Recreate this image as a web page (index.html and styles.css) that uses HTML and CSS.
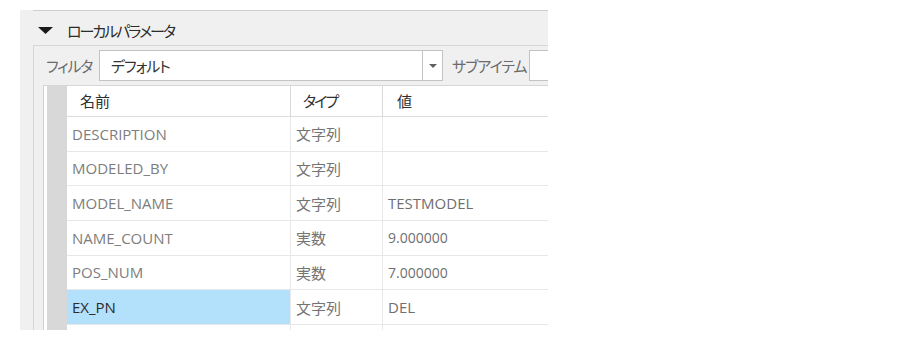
FILE: index.html
```html
<!DOCTYPE html>
<html lang="ja">
<head>
<meta charset="utf-8">
<link rel="stylesheet" href="styles.css">
</head>
<body>
<div class="panel">
  <div class="topline"></div>
  <div class="section-head">
    <svg class="tri" width="15" height="7" viewBox="0 0 15 7"><polygon points="0,0 15,0 7.5,7" fill="#1a1a1a"/></svg>
    <span class="title">ローカルパラメータ</span>
  </div>
  <div class="group">
    <div class="filter-row">
      <span class="label">フィルタ</span>
      <div class="combo">
        <span class="combo-text">デフォルト</span>
        <span class="combo-btn"><svg width="8" height="4" viewBox="0 0 8 4"><polygon points="0,0 8,0 4,4" fill="#606060"/></svg></span>
      </div>
      <span class="label sub">サブアイテム</span>
      <div class="input"></div>
    </div>
    <div class="table">
      <div class="rowhead"></div>
      <div class="grid">
        <div class="hcell c1">名前</div><div class="hcell c2 kana">タイプ</div><div class="hcell c3">値</div>
        <div class="cell c1">DESCRIPTION</div><div class="cell c2">文字列</div><div class="cell c3"></div>
        <div class="cell c1">MODELED_BY</div><div class="cell c2">文字列</div><div class="cell c3"></div>
        <div class="cell c1">MODEL_NAME</div><div class="cell c2">文字列</div><div class="cell c3">TESTMODEL</div>
        <div class="cell c1">NAME_COUNT</div><div class="cell c2">実数</div><div class="cell c3 num">9.000000</div>
        <div class="cell c1">POS_NUM</div><div class="cell c2">実数</div><div class="cell c3 num">7.000000</div>
        <div class="cell c1 sel">EX_PN</div><div class="cell c2">文字列</div><div class="cell c3">DEL</div>
        <div class="cell c1"></div><div class="cell c2"></div><div class="cell c3"></div>
      </div>
    </div>
  </div>
</div>
</body>
</html>
```

FILE: styles.css
```css
* { box-sizing: border-box; }
html, body { margin: 0; padding: 0; background: #ffffff; }
body {
  font-family: "Open Sans", "Noto Sans CJK JP", sans-serif;
  font-size: 15px;
  color: #333;
}
.panel {
  margin: 10px 0 0 20px;
  width: 528px;
  height: 320px;
  background: #f0f0f0;
  overflow: hidden;
}
.topline {
  margin-left: 13px;
  border-top: 1px solid #cfcfcf;
  width: 600px;
}
.section-head {
  height: 34px;
  display: flex;
  align-items: center;
  padding-left: 18px;
  padding-top: 4px;
}
.tri { display: block; flex-shrink: 0; }
.title {
  margin-left: 14px;
  font-family: "Noto Sans CJK JP", sans-serif;
  font-feature-settings: "palt";
  font-size: 15px;
  letter-spacing: -2px;
  color: #2b2b2b;
  white-space: nowrap;
}
.group {
  margin-left: 13px;
  width: 620px;
  height: 320px;
  border: 1px solid #d6d6d6;
  padding: 4px 0 0 12px;
}
.filter-row {
  display: flex;
  align-items: center;
  height: 31px;
}
.filter-row > * { flex-shrink: 0; }
.label {
  font-family: "Noto Sans CJK JP", sans-serif;
  font-feature-settings: "palt";
  font-size: 15px;
  letter-spacing: -1.2px;
  color: #6a6a6a;
  width: 53px;
  white-space: nowrap;
}
.label.sub { width: 77px; margin-left: 9px; letter-spacing: -1px; }
.combo {
  width: 344px;
  height: 31px;
  background: #fff;
  border: 1px solid #c3c3c3;
  display: flex;
  align-items: center;
}
.combo-text {
  flex: 1;
  padding-left: 11px;
  font-family: "Noto Sans CJK JP", sans-serif;
  font-feature-settings: "palt";
  letter-spacing: -1px;
  color: #333;
}
.combo-btn {
  width: 20px;
  height: 100%;
  border-left: 1px solid #c3c3c3;
  display: flex;
  align-items: center;
  justify-content: center;
}
.combo-btn svg { display: block; margin-top: 1px; }
.input {
  width: 120px;
  height: 31px;
  background: #fff;
  border: 1px solid #c3c3c3;
}
.table {
  margin: 4px 0 0 -3px;
  display: flex;
  background: #fff;
  border-left: 1px solid #d0d0d0;
  border-top: 1px solid #d6d6d6;
  padding-left: 3px;
  height: 260px;
}
.rowhead {
  width: 20px;
  background: #d8d8d8;
}
.grid {
  display: grid;
  grid-template-columns: 223px 92px 200px;
  grid-auto-rows: 34.67px;
  grid-template-rows: 31px;
  align-content: start;
}
.hcell, .cell {
  display: flex;
  align-items: center;
  border-bottom: 1px solid #e6e8eb;
  white-space: nowrap;
}
.hcell {
  padding-left: 13px;
  font-family: "Noto Sans CJK JP", sans-serif;
  font-feature-settings: "palt";
  color: #2f2f2f;
  border-bottom-color: #dedede;
  padding-bottom: 1px;
}
.hcell.kana { letter-spacing: -2px; }
.hcell.c2, .hcell.c3 { border-left: 1px solid #d9d9d9; }
.hcell.c2 { padding-left: 12px; }
.hcell.c3 { padding-left: 14px; }
.cell { padding-left: 5px; color: #7d7d7d; }
.cell.c2, .cell.c3 { border-left: 1px solid #e8e8e8; }
.cell.c2 {
  font-family: "Noto Sans CJK JP", sans-serif;
  color: #747474;
}
.cell.c3 { color: #6f6f6f; }
.cell.num { font-size: 14px; }
.cell.sel { background: #b3e1fb; color: #2a2a2a; }
```
